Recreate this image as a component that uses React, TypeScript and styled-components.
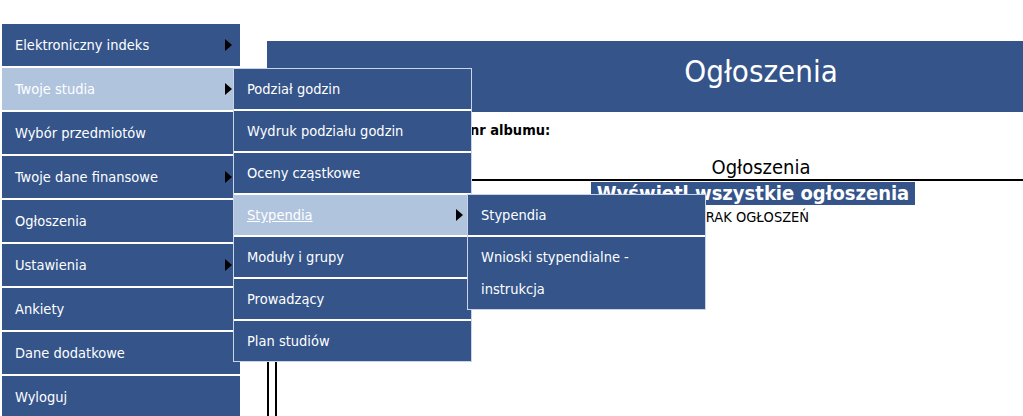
import styled, { createGlobalStyle } from "styled-components";

const BLUE = "#34548a";
const HOVER = "#b0c4de";

interface MenuEntry {
  label: string;
  arrow?: boolean;
}

const mainMenu: MenuEntry[] = [
  { label: "Elektroniczny indeks", arrow: true },
  { label: "Twoje studia", arrow: true },
  { label: "Wybór przedmiotów" },
  { label: "Twoje dane finansowe", arrow: true },
  { label: "Ogłoszenia" },
  { label: "Ustawienia", arrow: true },
  { label: "Ankiety" },
  { label: "Dane dodatkowe" },
  { label: "Wyloguj" },
];

const studiesMenu: MenuEntry[] = [
  { label: "Podział godzin" },
  { label: "Wydruk podziału godzin" },
  { label: "Oceny cząstkowe" },
  { label: "Stypendia", arrow: true },
  { label: "Moduły i grupy" },
  { label: "Prowadzący" },
  { label: "Plan studiów" },
];

const GlobalStyle = createGlobalStyle`
  html, body {
    margin: 0;
    padding: 0;
    background: #fff;
    overflow: hidden;
  }
  body {
    font-family: "DejaVu Sans Condensed", "DejaVu Sans", sans-serif;
    font-stretch: condensed;
    font-size: 14.5px;
    color: #000;
  }
`;

const Page = styled.div`
  display: flex;
  align-items: flex-start;
  width: 1023px;
  height: 416px;
  overflow: hidden;
`;

const Nav = styled.nav`
  position: relative;
  z-index: 2;
  flex-shrink: 0;
  width: 238px;
  margin: 24px 0 0 2px;
`;

const MenuItem = styled.div<{ $active?: boolean }>`
  position: relative;
  display: flex;
  align-items: center;
  justify-content: space-between;
  box-sizing: border-box;
  height: 42px;
  margin-bottom: 2px;
  padding: 0 8px 0 13px;
  background: ${(p) => (p.$active ? HOVER : BLUE)};
  color: #fff;
  cursor: pointer;
`;

const Arrow = styled.span`
  width: 0;
  height: 0;
  border-left: 7px solid #000;
  border-top: 6.5px solid transparent;
  border-bottom: 6.5px solid transparent;
`;

const Flyout = styled.div<{ $top: number; $left: number }>`
  position: absolute;
  top: ${(p) => p.$top}px;
  left: ${(p) => p.$left}px;
  z-index: 3;
  width: 239px;
  box-sizing: border-box;
  border: 1px solid #c9d4e6;
  background: #fff;
`;

const FlyoutItem = styled.div<{ $active?: boolean }>`
  position: relative;
  display: flex;
  align-items: center;
  justify-content: space-between;
  box-sizing: border-box;
  min-height: 40px;
  margin-bottom: 2px;
  padding: 4px 8px 4px 13px;
  line-height: 32px;
  background: ${(p) => (p.$active ? HOVER : BLUE)};
  color: #fff;
  cursor: pointer;

  &:last-child {
    margin-bottom: 0;
  }
`;

const Underlined = styled.span`
  text-decoration: underline;
`;

const Main = styled.main`
  flex-shrink: 0;
  width: 988px;
  margin: 41px 0 0 27px;
`;

const Header = styled.div`
  box-sizing: border-box;
  height: 71px;
  padding-top: 12px;
  background: ${BLUE};
  color: #fff;
  font-size: 31px;
  line-height: 36px;
  text-align: center;
`;

const InfoRow = styled.div`
  padding: 10px 0 0 203px;
  font-weight: 700;
  line-height: 17px;
`;

const SectionTitle = styled.h2`
  margin: 16px 0 0;
  border-bottom: 2px solid #000;
  font-size: 20px;
  font-weight: 400;
  line-height: 24px;
  text-align: center;
`;

const Frame = styled.div`
  margin-right: 16px;
  padding: 0 6px;
  border-left: 2px solid #000;
  border-right: 2px solid #000;
`;

const FrameInner = styled.div`
  height: 260px;
  padding-top: 1px;
  border-left: 2px solid #000;
  border-right: 2px solid #000;
`;

const ShowAll = styled.a`
  display: table;
  margin: 0 auto;
  padding: 0 6px;
  background: ${BLUE};
  color: #fff;
  font-size: 20px;
  font-weight: 700;
  line-height: 23px;
  text-decoration: none;
`;

const Empty = styled.div`
  margin-top: 4px;
  line-height: 17px;
  text-align: center;
`;

const App = () => {
  return (
    <>
      <GlobalStyle />
      <Page>
        <Nav>
          {mainMenu.map((entry) => (
            <MenuItem key={entry.label} $active={entry.label === "Twoje studia"}>
              {entry.label}
              {entry.arrow && <Arrow />}
              {entry.label === "Twoje studia" && (
                <Flyout $top={0} $left={231}>
                  {studiesMenu.map((sub) => (
                    <FlyoutItem key={sub.label} $active={sub.label === "Stypendia"}>
                      {sub.label === "Stypendia" ? <Underlined>{sub.label}</Underlined> : sub.label}
                      {sub.arrow && <Arrow />}
                      {sub.label === "Stypendia" && (
                        <Flyout $top={-1} $left={233}>
                          <FlyoutItem>Stypendia</FlyoutItem>
                          <FlyoutItem>
                            <span>
                              Wnioski stypendialne -
                              <br />
                              instrukcja
                            </span>
                          </FlyoutItem>
                        </Flyout>
                      )}
                    </FlyoutItem>
                  ))}
                </Flyout>
              )}
            </MenuItem>
          ))}
        </Nav>
        <Main>
          <Header>Ogłoszenia</Header>
          <InfoRow>nr albumu:</InfoRow>
          <SectionTitle>Ogłoszenia</SectionTitle>
          <Frame>
            <FrameInner>
              <ShowAll href="#">Wyświetl wszystkie ogłoszenia</ShowAll>
              <Empty>BRAK OGŁOSZEŃ</Empty>
            </FrameInner>
          </Frame>
        </Main>
      </Page>
    </>
  );
};

export default App;
